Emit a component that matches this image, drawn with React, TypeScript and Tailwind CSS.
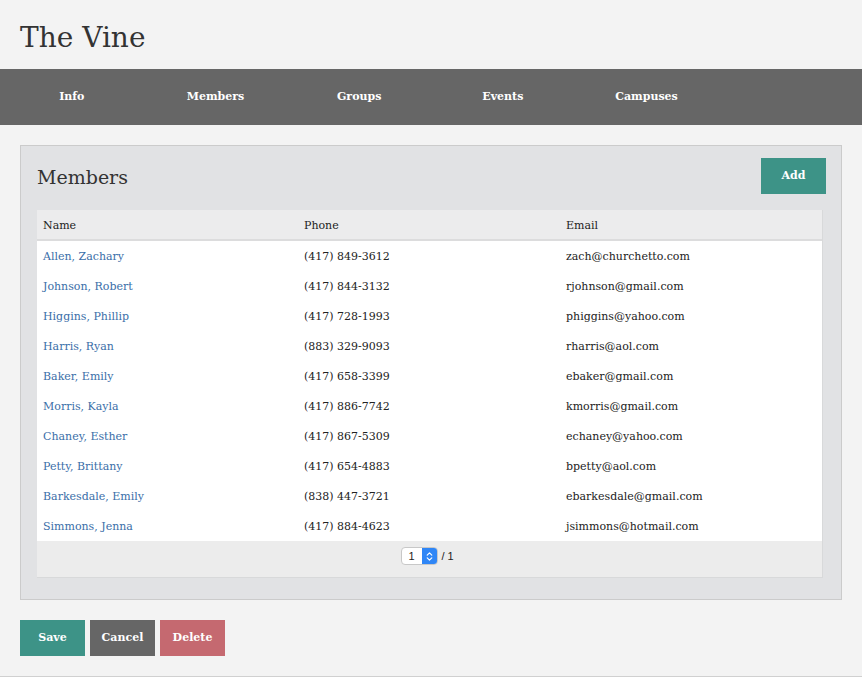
import { ChevronsUpDown } from 'lucide-react';

const members = [
  { name: 'Allen, Zachary', phone: '(417) 849-3612', email: 'zach@churchetto.com' },
  { name: 'Johnson, Robert', phone: '(417) 844-3132', email: 'rjohnson@gmail.com' },
  { name: 'Higgins, Phillip', phone: '(417) 728-1993', email: 'phiggins@yahoo.com' },
  { name: 'Harris, Ryan', phone: '(883) 329-9093', email: 'rharris@aol.com' },
  { name: 'Baker, Emily', phone: '(417) 658-3399', email: 'ebaker@gmail.com' },
  { name: 'Morris, Kayla', phone: '(417) 886-7742', email: 'kmorris@gmail.com' },
  { name: 'Chaney, Esther', phone: '(417) 867-5309', email: 'echaney@yahoo.com' },
  { name: 'Petty, Brittany', phone: '(417) 654-4883', email: 'bpetty@aol.com' },
  { name: 'Barkesdale, Emily', phone: '(838) 447-3721', email: 'ebarkesdale@gmail.com' },
  { name: 'Simmons, Jenna', phone: '(417) 884-4623', email: 'jsimmons@hotmail.com' },
];

const navItems = ['Info', 'Members', 'Groups', 'Events', 'Campuses'];

const App = () => {
  return (
    <div className="min-h-screen bg-[#f3f3f3] font-['DejaVu_Serif',serif] text-[#222]">
      <div className="border-b border-[#d0d0d0] pb-5">
        <h1 className="px-5 pt-[20px] pb-[13px] text-[28px] leading-[36px] text-[#333]">The Vine</h1>

        <nav className="grid h-[56px] grid-cols-6 items-center bg-[#666666]">
          {navItems.map(item => (
            <div key={item} className="text-center text-[11px] font-bold text-white">
              {item}
            </div>
          ))}
        </nav>

        <div className="mx-5 mt-5 border border-[#cbcbcb] bg-[#e1e2e4] pl-4 pr-[15px] pt-3 pb-[21px]">
          <div className="flex items-center justify-between">
            <h2 className="pt-[3px] text-[19px] text-[#333]">Members</h2>
            <button className="h-9 w-[65px] bg-[#3d9387] text-[11px] font-bold text-white">Add</button>
          </div>

          <div className="mt-4 mr-[3px] border-r border-b border-[#d8d9da] text-[11px]">
            <div className="grid h-[31px] grid-cols-[261px_262px_1fr] items-center border-b-2 border-[#dcdcdd] bg-[#ececed] px-[6px] pt-[3px]">
              <div>Name</div>
              <div>Phone</div>
              <div>Email</div>
            </div>
            {members.map(m => (
              <div key={m.name} className="grid h-[30px] grid-cols-[261px_262px_1fr] items-center bg-white px-[6px] pt-[2px]">
                <a className="text-[#3a6ea8]">{m.name}</a>
                <div>{m.phone}</div>
                <div>{m.email}</div>
              </div>
            ))}
            <div className="flex h-9 items-center justify-center gap-[3px] bg-[#ececec] pb-[6px] pr-[4px]">
              <div className="flex h-[18px] w-[37px] items-stretch overflow-hidden rounded-[4px] border border-[#c8c8c8] bg-white">
                <span className="flex-1 pl-[6px] text-[11px] leading-[16px] font-['Liberation_Sans',sans-serif]">1</span>
                <span className="flex w-[15px] items-center justify-center bg-[#2f86f6] text-white">
                  <ChevronsUpDown size={11} strokeWidth={2.5} />
                </span>
              </div>
              <span className="text-[11px] font-['Liberation_Sans',sans-serif]">/ 1</span>
            </div>
          </div>
        </div>

        <div className="mx-5 mt-5 flex gap-[5px]">
          <button className="h-9 w-[65px] bg-[#3d9387] text-[11px] font-bold text-white">Save</button>
          <button className="h-9 w-[65px] bg-[#666666] text-[11px] font-bold text-white">Cancel</button>
          <button className="h-9 w-[65px] bg-[#c56970] text-[11px] font-bold text-white">Delete</button>
        </div>
      </div>
    </div>
  );
};

export default App;
